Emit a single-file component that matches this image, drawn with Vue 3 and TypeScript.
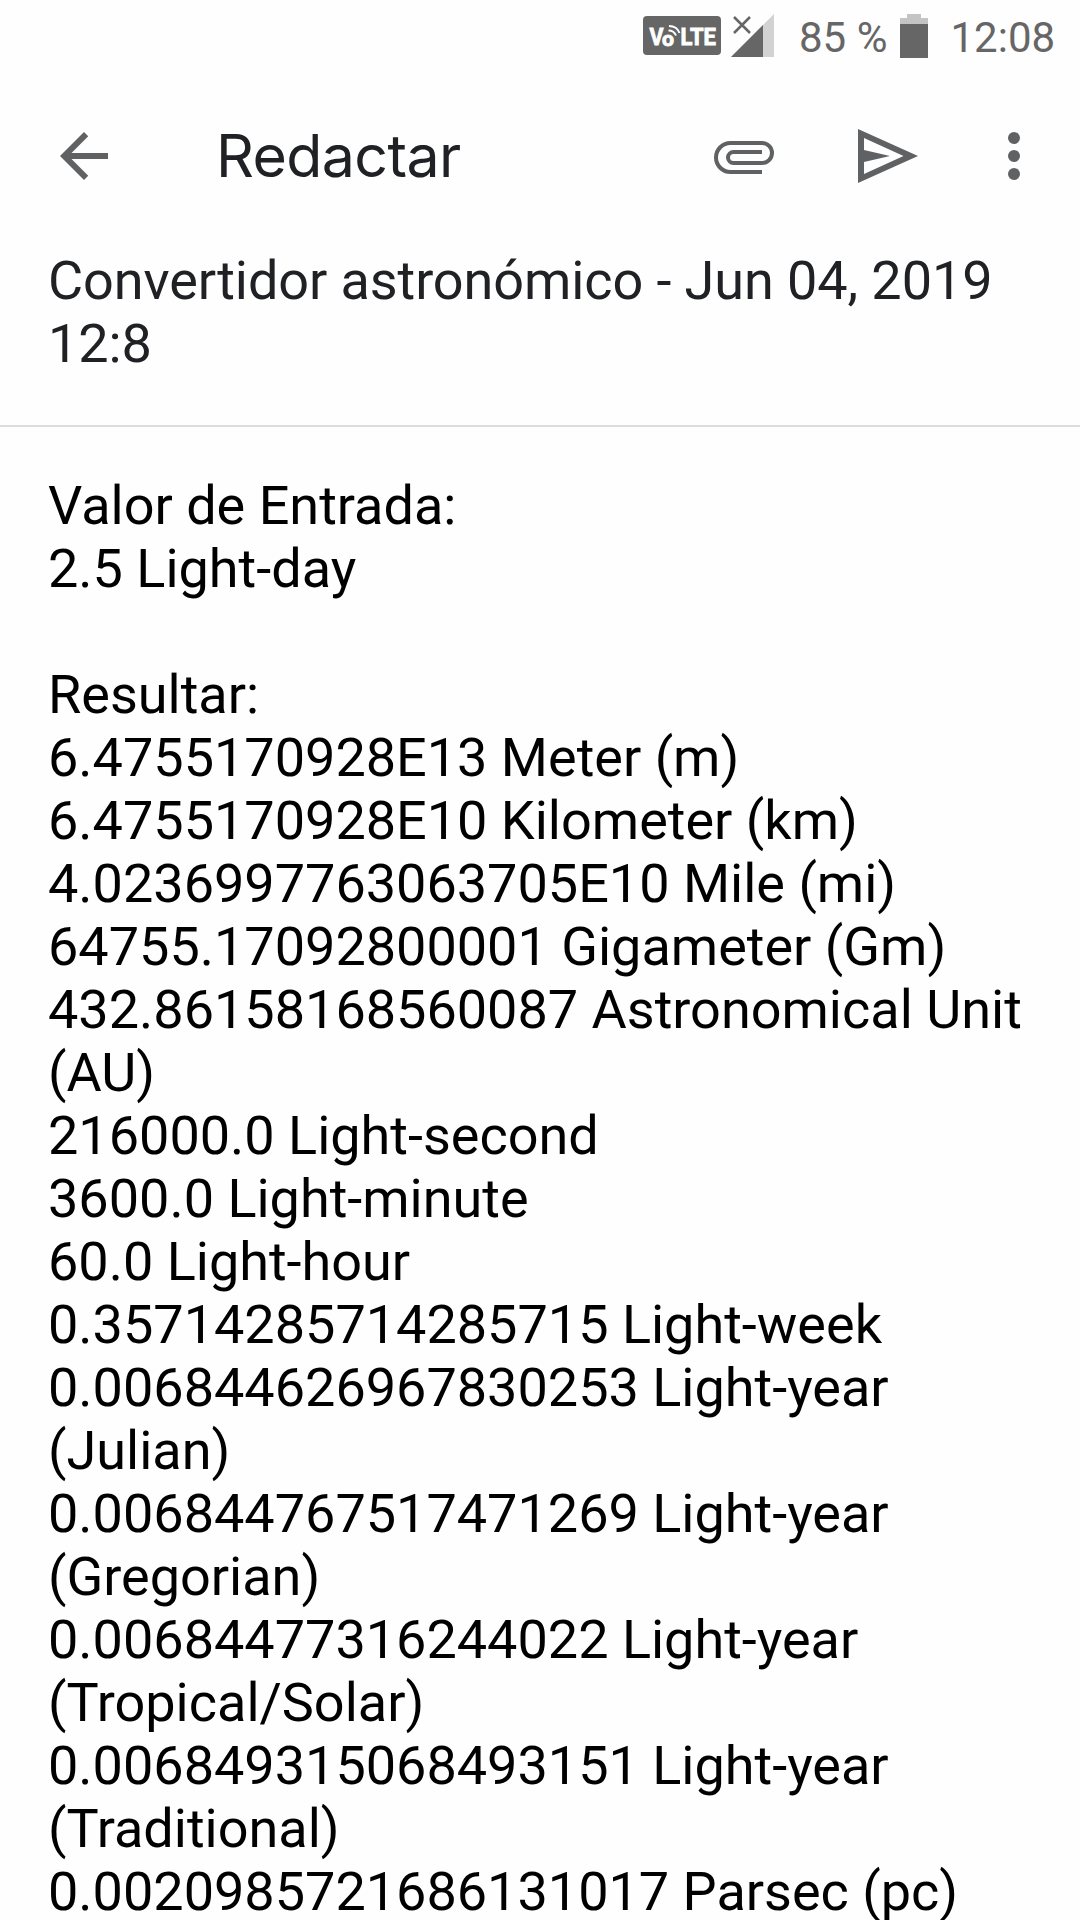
<script setup lang="ts">
const subject = 'Convertidor astronómico - Jun 04, 2019 12:8'

const lines: string[] = [
  'Valor de Entrada:',
  '2.5 Light-day',
  '',
  'Resultar:',
  '6.4755170928E13 Meter (m)',
  '6.4755170928E10 Kilometer (km)',
  '4.0236997763063705E10 Mile (mi)',
  '64755.17092800001 Gigameter (Gm)',
  '432.86158168560087 Astronomical Unit (AU)',
  '216000.0 Light-second',
  '3600.0 Light-minute',
  '60.0 Light-hour',
  '0.35714285714285715 Light-week',
  '0.006844626967830253 Light-year (Julian)',
  '0.006844767517471269 Light-year (Gregorian)',
  '0.00684477316244022 Light-year (Tropical/Solar)',
  '0.006849315068493151 Light-year (Traditional)',
  '0.0020985721686131017 Parsec (pc)',
]
</script>

<template>
  <div class="screen">
    <header class="status">
      <svg class="volte" width="78" height="39" viewBox="0 0 78 39">
        <rect width="78" height="39" rx="4" fill="#666" />
        <g fill="#fff" stroke="#fff" stroke-width=".8" font-family="Roboto, sans-serif" font-weight="700" font-size="23">
          <text x="6.500" y="29.3" textLength="14" lengthAdjust="spacingAndGlyphs">V</text>
          <text x="37.500" y="29.3" textLength="35.500" lengthAdjust="spacingAndGlyphs">LTE</text>
          <text x="19" y="29.800" font-size="20" textLength="12" lengthAdjust="spacingAndGlyphs">o</text>
        </g>
        <g fill="none" stroke="#fff" stroke-width="2">
          <path d="M25.500 14.500Q31 14.500 33 19.500" />
          <path d="M26 10Q34 10 36.500 17" />
        </g>
      </svg>
      <svg class="signal" width="43" height="43" viewBox="0 0 43 43">
        <path d="M43 0V43H0z" fill="#d2d2d2" />
        <path d="M32 11V43H0z" fill="#666" />
        <path d="M3 3L19 19M19 3L3 19" stroke="#666" stroke-width="2.5" />
      </svg>
      <span class="percent">85 %</span>
      <svg class="battery" width="28" height="44" viewBox="0 0 28 44">
        <path d="M7 0H21V4H28V11H0V4H7z" fill="#c4c4c4" />
        <path d="M0 10H28V44H0z" fill="#666" />
      </svg>
      <span class="clock">12:08</span>
    </header>

    <nav class="toolbar">
      <svg width="72" height="72" viewBox="0 0 24 24" fill="#5f6163">
        <path d="M20 11H7.830l5.590-5.590L12 4l-8 8 8 8 1.410-1.410L7.830 13H20z" />
      </svg>
      <h1>Redactar</h1>
      <div class="actions">
        <svg width="72" height="72" viewBox="0 0 72 72" fill="none" stroke="#5f6163" stroke-width="4">
          <path d="M54 52H22.500a14.500 14.500 0 0 1 0-29H54a10 10 0 0 1 0 20H25.500a5.500 5.500 0 0 1 0-11H54" />
        </svg>
        <svg width="72" height="72" viewBox="0 0 72 72" fill="#5f6163">
          <path fill-rule="evenodd" d="M6 9L66 36L6 63zM12 18V30L38 36L12 42V54L51.500 36z" />
        </svg>
        <svg width="72" height="72" viewBox="0 0 72 72" fill="#5f6163">
          <circle cx="36" cy="18" r="6" />
          <circle cx="36" cy="36" r="6" />
          <circle cx="36" cy="54" r="6" />
        </svg>
      </div>
    </nav>

    <section class="subject">{{ subject }}</section>
    <main class="message">
      <p v-for="(line, i) in lines" :key="i">{{ line }}</p>
    </main>
  </div>
</template>

<style>
body {
  margin: 0;
  background: #fff;
}
</style>

<style scoped>
.screen {
  width: 1080px;
  height: 1920px;
  overflow: hidden;
  background: #fefefe;
  font-family: Roboto, sans-serif;
  box-sizing: border-box;
}
svg {
  display: block;
  flex: none;
}
.status {
  display: flex;
  align-items: flex-start;
  height: 72px;
  padding-left: 643px;
  color: #666;
  font-size: 42px;
  line-height: 50px;
  white-space: nowrap;
}
.volte {
  margin-top: 16px;
}
.signal {
  margin: 14px 0 0 10px;
}
.percent {
  width: 101px;
  margin: 13px 0 0 25px;
}
.battery {
  margin-top: 14px;
}
.clock {
  margin: 13px 0 0 22.5px;
}
.toolbar {
  display: flex;
  align-items: center;
  height: 168px;
  padding: 0 30px 0 48px;
}
h1 {
  margin: 0 0 0 96px;
  font: 400 59px/72px Inter, sans-serif;
  letter-spacing: -0.6px;
  color: #202124;
}
.actions {
  display: flex;
  gap: 72px;
  margin-left: auto;
}
.toolbar .actions svg:last-child {
  margin-left: -18px;
}
.subject {
  height: 176px;
  padding: 9px 48px 0;
  border-bottom: 2px solid #ddd;
  font-size: 54px;
  line-height: 63px;
  letter-spacing: -0.09px;
  color: #202124;
}
.message {
  padding: 47px 48px 0;
  font-size: 54px;
  line-height: 63px;
  color: #000;
}
.message p {
  min-height: 63px;
  margin: 0;
}
</style>
